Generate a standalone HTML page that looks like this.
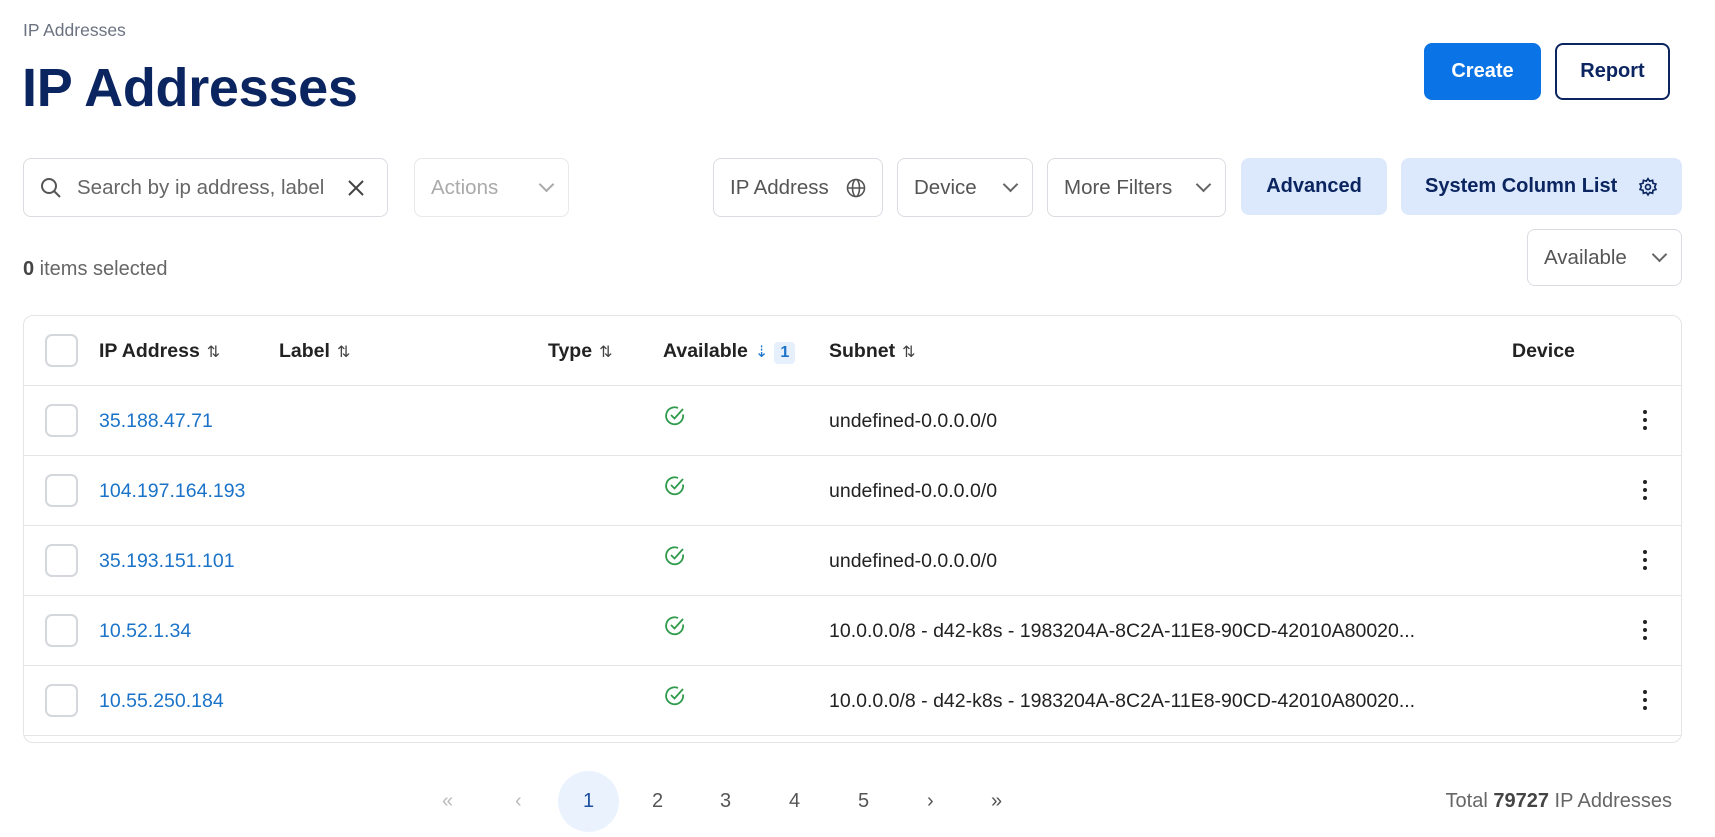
<!DOCTYPE html>
<html><head><meta charset="utf-8"><style>
*{box-sizing:border-box;margin:0;padding:0}
body{width:1715px;height:837px;background:#fff;font-family:"Liberation Sans",sans-serif;color:#222;position:relative;overflow:hidden}
.a{position:absolute}
.bc{left:23px;top:20px;font-size:17.5px;color:#6b7280}
.title{left:22px;top:57px;font-size:54px;font-weight:bold;color:#0b2560;letter-spacing:-0.3px}
.btn{position:absolute;border-radius:8px;font-size:20px;font-weight:bold;display:flex;align-items:center;justify-content:center}
.box{position:absolute;border:1px solid #d9dce1;border-radius:8px;display:flex;align-items:center;font-size:20.5px;color:#555;padding:0 16px;justify-content:space-between}
.chev{width:11px;height:11px;border-right:2px solid #666;border-bottom:2px solid #666;transform:rotate(45deg);margin-top:-6px}
.tbl{left:23px;top:315px;width:1659px;height:428px;border:1px solid #e3e5e8;border-radius:10px}
.row{position:absolute;left:0;width:100%;border-bottom:1px solid #e3e5e8;height:70px}
.cb{position:absolute;left:21px;width:33px;height:33px;border:2px solid #d4d7dc;border-radius:7px;top:18px}
.cell{position:absolute;top:0;line-height:70px;font-size:19.5px;white-space:nowrap}
.hd{font-weight:bold;color:#222}
.ip{color:#1a73c8}
.sort{color:#444;font-weight:normal;font-size:16px;margin-left:7px}
.kb{position:absolute;left:1619px;top:24px;width:4px}
.kb i{display:block;width:4px;height:4px;background:#222;border-radius:2px;margin-bottom:4px}
.pg{position:absolute;top:786px;font-size:20px;color:#555;line-height:30px}
</style></head><body>
<div class="a bc">IP Addresses</div>
<div class="a title">IP Addresses</div>
<div class="btn" style="left:1424px;top:43px;width:117px;height:57px;background:#0a74e6;color:#fff">Create</div>
<div class="btn" style="left:1555px;top:43px;width:115px;height:57px;border:2px solid #0b2560;color:#0b2560">Report</div>

<div class="box" style="left:23px;top:158px;width:365px;height:59px;justify-content:flex-start;color:#666">
<svg width="22" height="22" viewBox="0 0 22 22" fill="none" stroke="#555" stroke-width="2"><circle cx="9" cy="9" r="7"/><path d="M14 14l6 6"/></svg>
<span style="margin-left:15px;white-space:nowrap;overflow:hidden;width:270px">Search by ip address, label</span>
<svg width="18" height="18" viewBox="0 0 18 18" stroke="#444" stroke-width="2"><path d="M2 2l14 14M16 2L2 16"/></svg></div>
<div class="box" style="left:414px;top:158px;width:155px;height:59px;color:#aaa;border-color:#e6e8eb">Actions<span class="chev" style="border-color:#aaa"></span></div>
<div class="box" style="left:713px;top:158px;width:170px;height:59px">IP Address
<svg width="20" height="20" viewBox="0 0 20 20" fill="none" stroke="#555" stroke-width="1.6"><circle cx="10" cy="10" r="8.5"/><ellipse cx="10" cy="10" rx="3.5" ry="8.5"/><path d="M1.5 10h17"/></svg></div>
<div class="box" style="left:897px;top:158px;width:136px;height:59px">Device<span class="chev"></span></div>
<div class="box" style="left:1047px;top:158px;width:179px;height:59px">More Filters<span class="chev"></span></div>
<div class="btn" style="left:1241px;top:158px;width:146px;height:57px;background:#dce8fb;color:#0b2560">Advanced</div>
<div class="btn" style="left:1401px;top:158px;width:281px;height:57px;background:#dce8fb;color:#0b2560;justify-content:space-between;padding:0 24px">System Column List
<svg width="20" height="20" viewBox="0 0 24 24" fill="none" stroke="#0b2560" stroke-width="2"><circle cx="12" cy="12" r="3"/><path d="M12 2l2 3 3.5-1 .5 3.5 3.5 1-1.5 3.5 1.5 3-3.5 1-.5 3.5-3.5-1-2 3-2-3-3.5 1-.5-3.5-3.5-1 1.5-3.5L2.5 8.5 6 7.5 6.5 4 10 5z"/></svg></div>

<div class="a" style="left:23px;top:258px;font-size:20px;color:#666"><b style="color:#444">0</b> items selected</div>
<div class="box" style="left:1527px;top:229px;width:155px;height:57px">Available<span class="chev"></span></div>

<div class="a tbl">
<div class="row" style="top:0"><div class="cb"></div>
<div class="cell hd" style="left:75px">IP Address<span class="sort">⇅</span></div>
<div class="cell hd" style="left:255px">Label<span class="sort">⇅</span></div>
<div class="cell hd" style="left:524px">Type<span class="sort">⇅</span></div>
<div class="cell hd" style="left:639px">Available<span class="sort" style="color:#1a73c8">⇣</span><span style="display:inline-block;background:#e6f0fc;color:#1a73c8;font-size:16px;line-height:22px;padding:0 6px;border-radius:4px;margin-left:6px">1</span></div>
<div class="cell hd" style="left:805px">Subnet<span class="sort">⇅</span></div>
<div class="cell hd" style="left:1488px">Device</div></div>
<div class="row" style="top:70px"><div class="cb"></div><div class="cell ip" style="left:75px">35.188.47.71</div><div class="cell" style="left:640px"><svg width="22" height="22" viewBox="0 0 22 22" fill="none" stroke="#2e9a4a" stroke-width="1.8"><path d="M19 9.5A8.5 8.5 0 1 1 14 3"/><path d="M7 10l3.5 3.5L19 4"/></svg></div><div class="cell" style="left:805px">undefined-0.0.0.0/0</div><div class="kb"><i></i><i></i><i></i></div></div>
<div class="row" style="top:140px"><div class="cb"></div><div class="cell ip" style="left:75px">104.197.164.193</div><div class="cell" style="left:640px"><svg width="22" height="22" viewBox="0 0 22 22" fill="none" stroke="#2e9a4a" stroke-width="1.8"><path d="M19 9.5A8.5 8.5 0 1 1 14 3"/><path d="M7 10l3.5 3.5L19 4"/></svg></div><div class="cell" style="left:805px">undefined-0.0.0.0/0</div><div class="kb"><i></i><i></i><i></i></div></div>
<div class="row" style="top:210px"><div class="cb"></div><div class="cell ip" style="left:75px">35.193.151.101</div><div class="cell" style="left:640px"><svg width="22" height="22" viewBox="0 0 22 22" fill="none" stroke="#2e9a4a" stroke-width="1.8"><path d="M19 9.5A8.5 8.5 0 1 1 14 3"/><path d="M7 10l3.5 3.5L19 4"/></svg></div><div class="cell" style="left:805px">undefined-0.0.0.0/0</div><div class="kb"><i></i><i></i><i></i></div></div>
<div class="row" style="top:280px"><div class="cb"></div><div class="cell ip" style="left:75px">10.52.1.34</div><div class="cell" style="left:640px"><svg width="22" height="22" viewBox="0 0 22 22" fill="none" stroke="#2e9a4a" stroke-width="1.8"><path d="M19 9.5A8.5 8.5 0 1 1 14 3"/><path d="M7 10l3.5 3.5L19 4"/></svg></div><div class="cell" style="left:805px">10.0.0.0/8 - d42-k8s - 1983204A-8C2A-11E8-90CD-42010A80020...</div><div class="kb"><i></i><i></i><i></i></div></div>
<div class="row" style="top:350px"><div class="cb"></div><div class="cell ip" style="left:75px">10.55.250.184</div><div class="cell" style="left:640px"><svg width="22" height="22" viewBox="0 0 22 22" fill="none" stroke="#2e9a4a" stroke-width="1.8"><path d="M19 9.5A8.5 8.5 0 1 1 14 3"/><path d="M7 10l3.5 3.5L19 4"/></svg></div><div class="cell" style="left:805px">10.0.0.0/8 - d42-k8s - 1983204A-8C2A-11E8-90CD-42010A80020...</div><div class="kb"><i></i><i></i><i></i></div></div>
</div>

<div class="a" style="left:558px;top:771px;width:61px;height:61px;border-radius:50%;background:#eaf2fd"></div>
<div class="pg" style="left:442px;color:#bbb">«</div>
<div class="pg" style="left:515px;color:#bbb">‹</div>
<div class="pg" style="left:583px;color:#1a4fa0">1</div>
<div class="pg" style="left:652px">2</div>
<div class="pg" style="left:720px">3</div>
<div class="pg" style="left:789px">4</div>
<div class="pg" style="left:858px">5</div>
<div class="pg" style="left:927px">›</div>
<div class="pg" style="left:991px">»</div>
<div class="pg" style="right:43px;color:#666">Total <b style="color:#444">79727</b> IP Addresses</div>
</body></html>
